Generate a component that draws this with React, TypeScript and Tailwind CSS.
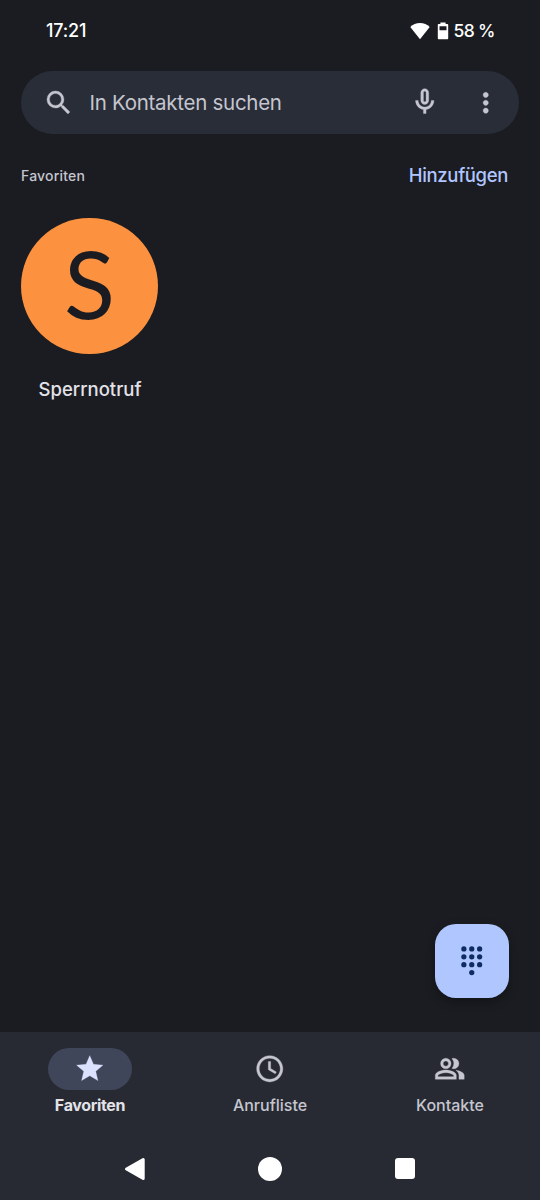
import React from 'react'

type IconProps = { d: string; size?: number; className?: string }

const icons = {
    search: 'M15.5 14h-.79l-.28-.27A6.47 6.47 0 0 0 16 9.5 6.5 6.5 0 1 0 9.5 16c1.61 0 3.09-.59 4.23-1.57l.27.28v.79l5 4.99L20.49 19l-4.99-5zm-6 0C7.01 14 5 11.99 5 9.5S7.01 5 9.5 5 14 7.01 14 9.5 11.99 14 9.5 14z',
    mic: 'M12 14c1.66 0 3-1.34 3-3V5c0-1.66-1.34-3-3-3S9 3.34 9 5v6c0 1.66 1.34 3 3 3zm-1-9c0-.55.45-1 1-1s1 .45 1 1v6c0 .55-.45 1-1 1s-1-.45-1-1V5zm6 6c0 2.76-2.24 5-5 5s-5-2.24-5-5H5c0 3.53 2.61 6.43 6 6.92V21h2v-3.08c3.39-.49 6-3.39 6-6.92h-2z',
    more: 'M12 8c1.1 0 2-.9 2-2s-.9-2-2-2-2 .9-2 2 .9 2 2 2zm0 2c-1.1 0-2 .9-2 2s.9 2 2 2 2-.9 2-2-.9-2-2-2zm0 6c-1.1 0-2 .9-2 2s.9 2 2 2 2-.9 2-2-.9-2-2-2z',
    star: 'M12 17.27 18.18 21l-1.64-7.03L22 9.24l-7.19-.61L12 2 9.19 8.63 2 9.24l5.46 4.73L5.82 21z',
    clock: 'M11.99 2C6.47 2 2 6.48 2 12s4.47 10 9.99 10C17.52 22 22 17.52 22 12S17.52 2 11.99 2zM12 20c-4.42 0-8-3.58-8-8s3.58-8 8-8 8 3.58 8 8-3.58 8-8 8zM12.7 6.5H10.9v6.2l5.3 3.15.85-1.45-4.35-2.65z',
    people: 'M9 12a4 4 0 1 0 0-8 4 4 0 0 0 0 8zm0-6a2 2 0 1 1 0 4 2 2 0 0 1 0-4zM9 13c-2.67 0-8 1.34-8 4v3h16v-3c0-2.66-5.33-4-8-4zm6 5H3v-.99C3.2 16.29 6.3 15 9 15s5.8 1.29 6 2v1zM15 12a4 4 0 0 0 0-8c-.47 0-.91.1-1.33.24a5.98 5.98 0 0 1 0 7.52c.42.14.86.24 1.33.24zM16.67 13.13C18.04 14.06 19 15.32 19 17v3h4v-3c0-2.18-3.58-3.47-6.33-3.87z',
}

const dots = [[6, 3], [12, 3], [18, 3], [6, 9], [12, 9], [18, 9], [6, 15], [12, 15], [18, 15], [12, 21]]

function Icon({ d, size = 31.5, className = '' }: IconProps) {
    return (
        <svg width={size} height={size} viewBox="0 0 24 24" fill="currentColor" stroke="currentColor" strokeWidth="0.25" className={`shrink-0 ${className}`}>
            <path d={d} />
        </svg>
    )
}

function StatusBar() {
    return (
        <div className="flex h-[71px] items-start justify-between pt-[20px] pl-[46px] pr-[46px] text-lg leading-[22px] font-medium text-white">
            <span className="tracking-[-0.2px]">17:21</span>
            <div className="flex items-center">
                <svg width="20" height="18" viewBox="0 0 20 18" fill="currentColor" className="mr-[7px]">
                    <path d="M10 17.2.3 5.1C2.8 2.5 6.3 1 10 1s7.2 1.5 9.7 4.1z" />
                </svg>
                <svg width="12" height="18" viewBox="0 0 12 18" className="mr-[4.5px]">
                    <path fill="currentColor" fillRule="evenodd" d="M3.4.5h5.200v1.600h1.600c.6 0 1 .4 1 1v13.200c0 .6-.4 1-1 1H1.800c-.6 0-1-.4-1-1V3.100c0-.6.4-1 1-1H3.400zM2.500 4.200v4h7v-4z" />
                </svg>
                <span className="w-[40.5px] text-[17.5px] whitespace-nowrap tracking-[-0.65px]">58 %</span>
            </div>
        </div>
    )
}

function SearchBar() {
    return (
        <div className="mx-[21px] flex h-[63px] items-center rounded-full bg-[#292d37] pl-[21.5px] pr-[18px] text-[#c5c6d0]">
            <Icon d={icons.search} />
            <span className="mt-px ml-[15.5px] flex-1 text-[20.5px] tracking-[-0.28px]">In Kontakten suchen</span>
            <Icon d={icons.mic} className="mr-[29.5px] -mt-px" />
            <Icon d={icons.more} />
        </div>
    )
}

function NavItem({ icon, label, active }: { icon: string; label: string; active?: boolean }) {
    return (
        <div className={`flex flex-1 flex-col items-center ${active ? 'text-[#dae2ff]' : 'text-[#c5c6d0]'}`}>
            <div className={`flex h-[42px] w-[84px] items-center justify-center rounded-full ${active ? 'bg-[#404659]' : ''}`}>
                <Icon d={icon} />
            </div>
            <span className={`mt-[4.5px] text-base leading-[22px] ${active ? 'font-bold text-[#e3e2e9] tracking-[-0.35px]' : 'font-medium'}`}>{label}</span>
        </div>
    )
}

export default function App() {
    return (
        <div className="flex h-[1200px] w-[540px] flex-col overflow-hidden bg-[#1b1c21] font-['Inter',sans-serif]">
            <StatusBar />
            <SearchBar />

            <main className="flex flex-1 flex-col">
                <div className="mt-[29px] flex h-[26px] items-center justify-between pl-[21px] pr-[32px]">
                    <h2 className="text-sm font-medium tracking-[0.2px] text-[#c5c6d0]">Favoriten</h2>
                    <button className="text-[18.5px] font-medium tracking-[-0.35px] text-[#b0c6ff]">Hinzufügen</button>
                </div>

                <div className="mt-[28.5px] ml-[21px] flex w-[137px] flex-col items-center">
                    <div className="flex size-[136.5px] items-center justify-center rounded-full bg-[#fc9240]">
                        <span className="pb-[5px] font-['Lato',sans-serif] text-[94px] leading-none text-[#1b1c21]">S</span>
                    </div>
                    <span className="mt-[22px] ml-px text-[18.5px] leading-[26px] font-medium text-[#e3e2e9]">Sperrnotruf</span>
                </div>

                <button className="mt-auto mr-[31.5px] mb-[34px] flex size-[73.5px] items-center justify-center self-end rounded-[21px] bg-[#b0c6ff] text-[#0f2c60] shadow-[0_4px_10px_rgba(0,0,0,0.3)]">
                    <svg width="31.5" height="31.5" viewBox="0 0 24 24" fill="currentColor">
                        {dots.map(([x, y]) => <circle key={`${x}-${y}`} cx={x} cy={y} r="2" />)}
                    </svg>
                </button>
            </main>

            <footer className="h-[168.5px] bg-[#272a32] pt-[16px]">
                <nav className="flex">
                    <NavItem icon={icons.star} label="Favoriten" active />
                    <NavItem icon={icons.clock} label="Anrufliste" />
                    <NavItem icon={icons.people} label="Kontakte" />
                </nav>
                <div className="mt-[40.5px] flex items-center justify-between pl-[124px] pr-[125px] text-white">
                    <svg width="22" height="24" viewBox="0 0 22 24" fill="currentColor" stroke="currentColor" strokeWidth="3" strokeLinejoin="round">
                        <path d="M2.5 12 19.2 2.5v19z" />
                    </svg>
                    <div className="size-6 rounded-full bg-white" />
                    <div className="size-[20.5px] rounded-[3px] bg-white" />
                </div>
            </footer>
        </div>
    )
}
